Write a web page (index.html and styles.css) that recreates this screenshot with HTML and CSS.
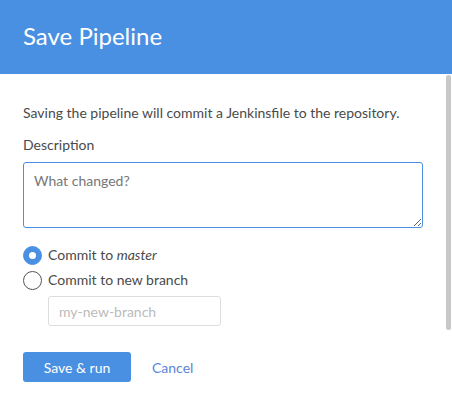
FILE: index.html
```html
<!DOCTYPE html>
<html>
<head>
<meta charset="utf-8">
<link rel="stylesheet" href="styles.css">
</head>
<body>
<div class="dialog">
  <header class="dialog-header">
    <h1 class="dialog-title">Save Pipeline</h1>
  </header>
  <div class="dialog-body">
    <p class="intro">Saving the pipeline will commit a Jenkinsfile to the repository.</p>
    <label class="field-label">Description</label>
    <textarea class="description" placeholder="What changed?"></textarea>
    <div class="radios">
      <label class="radio-row">
        <span class="radio radio-checked"></span>
        <span>Commit to <em>master</em></span>
      </label>
      <label class="radio-row">
        <span class="radio"></span>
        <span>Commit to new branch</span>
      </label>
      <input class="branch-input" type="text" placeholder="my-new-branch">
    </div>
    <div class="actions">
      <button class="btn-primary">Save &amp; run</button>
      <a class="btn-link">Cancel</a>
    </div>
    <div class="scroll-thumb"></div>
  </div>
</div>
</body>
</html>
```
FILE: styles.css
```css
* { box-sizing: border-box; }
html, body { margin: 0; padding: 0; background: #fff; }
body {
  font-family: Lato, "Open Sans", sans-serif;
  color: #4a4a4a;
  font-size: 14px;
}
.dialog { width: 452px; height: 412px; position: relative; overflow: hidden; }
.dialog-header {
  height: 74px;
  background: #4a90e2;
  padding: 0 23px;
  display: flex;
  align-items: center;
}
.dialog-title {
  margin: 0;
  font-weight: 400;
  font-size: 24px;
  color: #fff;
  line-height: 30px;
  padding-bottom: 2px;
}
.dialog-body {
  padding: 29px 29px 0 23px;
  display: flex;
  flex-direction: column;
}
.intro { margin: 0; line-height: 20px; }
.field-label { display: block; margin-top: 12px; line-height: 20px; }
.description {
  margin-top: 7px;
  width: 400px;
  height: 66px;
  border: 1px solid #4a90e2;
  border-radius: 3px;
  padding: 9px 10px;
  font-family: Lato, sans-serif;
  font-size: 14px;
  color: #4a4a4a;
  resize: vertical;
  outline: none;
}
.description::placeholder { color: #777; }
.radios { margin-top: 17px; display: flex; flex-direction: column; }
.radio-row {
  display: flex;
  align-items: center;
  gap: 6px;
  height: 20px;
  margin-bottom: 5px;
  line-height: 20px;
}
.radio {
  width: 19px;
  height: 19px;
  border-radius: 50%;
  border: 1px solid #555;
  background: #fff;
  flex: none;
  display: flex;
  align-items: center;
  justify-content: center;
}
.radio-checked { background: #4a90e2; border-color: #4a90e2; }
.radio-checked::after {
  content: "";
  width: 7px;
  height: 7px;
  border-radius: 50%;
  background: #fff;
}
.radio-row em { font-style: italic; }
.branch-input {
  margin: 1px 0 0 25px;
  width: 173px;
  height: 30px;
  border: 1px solid #ddd;
  border-radius: 3px;
  padding: 0 10px;
  font-family: Lato, sans-serif;
  font-size: 14px;
  outline: none;
}
.branch-input::placeholder { color: #bbb; }
.actions {
  margin-top: 26px;
  display: flex;
  align-items: center;
  gap: 21px;
}
.btn-primary {
  width: 108px;
  height: 30px;
  border: 0;
  border-radius: 3px;
  background: #4a90e2;
  color: #fff;
  font-family: Lato, sans-serif;
  font-size: 14px;
  padding: 0;
}
.btn-link { color: #5a86d8; font-size: 14px; }
.scroll-thumb {
  position: absolute;
  right: 1px;
  top: 75px;
  width: 5px;
  height: 255px;
  border-radius: 3px;
  background: #c8c8c8;
}
```
